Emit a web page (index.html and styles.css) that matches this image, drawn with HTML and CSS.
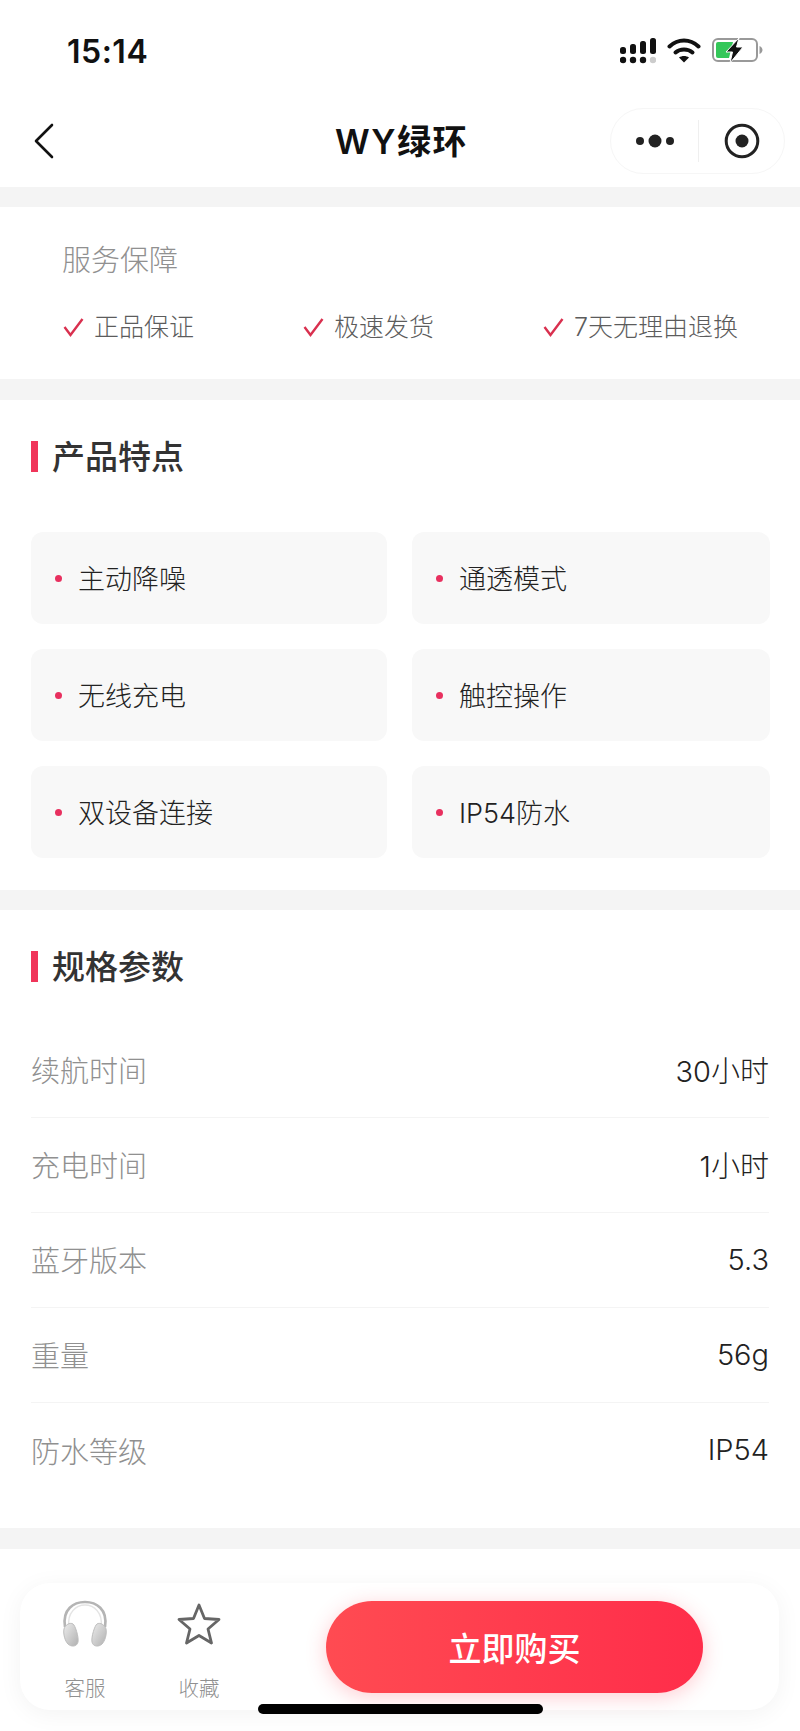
FILE: index.html
```html
<!DOCTYPE html>
<html lang="zh">
<head>
<meta charset="UTF-8" />
<meta name="viewport" content="width=device-width, initial-scale=1" />
<title>WY绿环</title>
<link rel="stylesheet" href="styles.css">
</head>
<body>

<div class="status">
  <span class="time">15:14</span>
  <div class="status-icons">
    <svg width="36" height="26" viewBox="0 0 36 26">
      <rect x="0" y="9" width="6" height="7" rx="2.500" fill="#111"/>
      <rect x="10" y="6" width="6" height="10" rx="2.500" fill="#111"/>
      <rect x="20" y="3" width="6" height="13" rx="2.500" fill="#111"/>
      <rect x="30" y="0" width="6" height="16" rx="2.500" fill="#111"/>
      <circle cx="3" cy="22" r="3.200" fill="#111"/>
      <circle cx="13" cy="22" r="3.200" fill="#111"/>
      <circle cx="23" cy="22" r="3.200" fill="#111"/>
      <circle cx="33" cy="22" r="3.200" fill="#ccc"/>
    </svg>
    <svg width="34" height="26" viewBox="0 0 34 26">
      <path d="M2.500 8.500 C11 0.500 23 0.500 31.500 8.500" fill="none" stroke="#111" stroke-width="4" stroke-linecap="round"/>
      <path d="M8.500 14.500 C13 10.500 21 10.500 25.500 14.500" fill="none" stroke="#111" stroke-width="4" stroke-linecap="round"/>
      <path d="M12 19.500 C15 17.500 19 17.500 22 19.500 L17 24.500 Z" fill="#111"/>
    </svg>
    <svg class="battery" width="51" height="30" viewBox="0 0 51 30">
      <rect x="1" y="4" width="44" height="22" rx="5" fill="#fff" stroke="#999" stroke-width="2"/>
      <path d="M4 9 a2 2 0 0 1 2-2 H21 L17 23 H6 a2 2 0 0 1-2-2 Z" fill="#34c759"/>
      <path d="M47.500 11 C49.500 12 50.500 13.500 50.500 15 C50.500 16.500 49.500 18 47.500 19 Z" fill="#999"/>
      <path d="M27 3 L14 17 H20.500 L18 28 L31 12 H24.500 Z" fill="#111" stroke="#fff" stroke-width="1"/>
    </svg>
  </div>
</div>

<header class="navbar">
  <svg width="22" height="36" viewBox="0 0 22 36">
    <path d="M19 2 L3 18 L19 34" fill="none" stroke="#111" stroke-width="2.600" stroke-linecap="round" stroke-linejoin="round"/>
  </svg>
  <h1 class="title">WY绿环</h1>
  <div class="capsule">
    <div class="capsule-btn">
      <svg width="40" height="16" viewBox="0 0 40 16">
        <circle cx="5" cy="8" r="4" fill="#222"/>
        <circle cx="20" cy="8" r="6.500" fill="#222"/>
        <circle cx="35" cy="8" r="4" fill="#222"/>
      </svg>
    </div>
    <div class="capsule-btn capsule-right">
      <svg width="36" height="36" viewBox="0 0 36 36">
        <circle cx="18" cy="18" r="15.800" fill="none" stroke="#222" stroke-width="3"/>
        <circle cx="18" cy="18" r="6.500" fill="#222"/>
      </svg>
    </div>
  </div>
</header>

<section class="service">
  <div class="service-title">服务保障</div>
  <div class="service-list">
    <div class="service-item">
      <svg width="21" height="21" viewBox="0 0 21 21"><path d="M1.500 10 L7.500 18 L19.500 2" fill="none" stroke="#d9304f" stroke-width="2.400"/></svg>
      <span>正品保证</span>
    </div>
    <div class="service-item">
      <svg width="21" height="21" viewBox="0 0 21 21"><path d="M1.500 10 L7.500 18 L19.500 2" fill="none" stroke="#d9304f" stroke-width="2.400"/></svg>
      <span>极速发货</span>
    </div>
    <div class="service-item">
      <svg width="21" height="21" viewBox="0 0 21 21"><path d="M1.500 10 L7.500 18 L19.500 2" fill="none" stroke="#d9304f" stroke-width="2.400"/></svg>
      <span>7天无理由退换</span>
    </div>
  </div>
</section>

<section class="features">
  <h2 class="section-title">产品特点</h2>
  <div class="feature-grid">
    <div class="feature"><i></i>主动降噪</div>
    <div class="feature"><i></i>通透模式</div>
    <div class="feature"><i></i>无线充电</div>
    <div class="feature"><i></i>触控操作</div>
    <div class="feature"><i></i>双设备连接</div>
    <div class="feature"><i></i>IP54防水</div>
  </div>
</section>

<section class="specs">
  <h2 class="section-title">规格参数</h2>
  <div class="spec-list">
    <div class="spec"><span>续航时间</span><b>30小时</b></div>
    <div class="spec"><span>充电时间</span><b>1小时</b></div>
    <div class="spec"><span>蓝牙版本</span><b>5.3</b></div>
    <div class="spec"><span>重量</span><b>56g</b></div>
    <div class="spec"><span>防水等级</span><b>IP54</b></div>
  </div>
</section>

<section class="page-end"></section>

<div class="bottom-bar">
  <div class="bar-action">
    <svg width="50" height="50" viewBox="0 0 50 50">
      <defs>
        <linearGradient id="cup" x1="0" y1="0" x2="1" y2="1">
          <stop offset="0" stop-color="#ececec"/>
          <stop offset="1" stop-color="#b0b0b0"/>
        </linearGradient>
      </defs>
      <path d="M5 27 C2 9 14 2 25 2 C36 2 48 9 45 27" fill="none" stroke="#b4b4b4" stroke-width="2.600"/>
      <path d="M9 26 C7 13 16 5 25 5 C34 5 43 13 41 26" fill="none" stroke="#e4e4e4" stroke-width="1.500"/>
      <path d="M4 29 C5 25 10 22 13 24 C15 25 19 37 18 42 C17 47 11 47 8 44 C5 41 3 34 4 29 Z" fill="url(#cup)" stroke="#bdbdbd"/>
      <path d="M46 29 C45 25 40 22 37 24 C35 25 31 37 32 42 C33 47 39 47 42 44 C45 41 47 34 46 29 Z" fill="url(#cup)" stroke="#bdbdbd"/>
    </svg>
    <span>客服</span>
  </div>
  <div class="bar-action bar-star">
    <svg width="46" height="46" viewBox="0 0 46 46">
      <path d="M23 4 L28.500 17.500 L43 18.500 L32 28 L35.500 42 L23 34.500 L10.500 42 L14 28 L3 18.500 L17.500 17.500 Z" fill="none" stroke="#666" stroke-width="2.800" stroke-linejoin="round"/>
    </svg>
    <span>收藏</span>
  </div>
  <button class="buy">立即购买</button>
</div>
<div class="home-indicator"></div>

</body>
</html>
```

FILE: styles.css
```css
* {
  box-sizing: border-box;
}
html, body {
  margin: 0;
  padding: 0;
}
body {
  position: relative;
  height: 1731px;
  overflow: hidden;
  background: #fff;
  font-family: Inter, "Noto Sans CJK SC", sans-serif;
  font-weight: 300;
  color: #333;
}
section {
  background: #fff;
  border-top: 20px solid #f4f4f4;
}

/* status bar */
.status {
  height: 94px;
  display: flex;
  justify-content: space-between;
  padding: 32px 37px 0 67px;
}
.time {
  font-size: 32px;
  font-weight: 600;
  line-height: 40px;
  letter-spacing: 0.500px;
  color: #111;
}
.status-icons {
  display: flex;
  align-items: flex-start;
  gap: 11px;
  padding-top: 6px;
}
.battery {
  margin-top: -3px;
}

/* nav */
.navbar {
  height: 93px;
  display: flex;
  align-items: center;
  justify-content: space-between;
  position: relative;
  padding: 0 15px 0 33px;
}
.title {
  position: absolute;
  left: 335px;
  top: 24px;
  margin: 0;
  font-size: 34px;
  line-height: 48px;
  font-weight: 600;
  letter-spacing: 1.500px;
  color: #111;
}
.capsule {
  width: 175px;
  height: 66px;
  display: flex;
  border: 1px solid #f6f6f6;
  border-radius: 33px;
}
.capsule-btn {
  flex: 0 0 87px;
  display: flex;
  align-items: center;
  justify-content: center;
}
.capsule-right {
  flex: 1;
  padding-left: 2px;
  position: relative;
}
.capsule-right::before {
  content: "";
  position: absolute;
  left: 0;
  top: 11px;
  bottom: 11px;
  width: 1px;
  background: #efefef;
}

/* service */
.service {
  height: 192px;
  padding: 33px 0 0 62px;
}
.service-title {
  font-size: 29px;
  line-height: 42px;
  color: #909090;
}
.service-list {
  display: flex;
  margin: 24px 0 0 1px;
}
.service-item {
  flex: 0 0 240px;
  display: flex;
  align-items: center;
  gap: 10px;
  font-size: 25px;
  line-height: 42px;
  color: #5c5c5c;
}

/* features */
.section-title {
  margin: 0;
  padding-left: 21px;
  position: relative;
  font-size: 33px;
  line-height: 50px;
  font-weight: 500;
  color: #333;
}
.section-title::before {
  content: "";
  position: absolute;
  left: 0;
  top: 9px;
  width: 7px;
  height: 31px;
  background: #f0355a;
}
.features {
  height: 511px;
  border-top-width: 21px;
  padding: 32px 30px 0 31px;
}
.feature-grid {
  display: grid;
  grid-template-columns: 356px 358px;
  grid-auto-rows: 92px;
  gap: 25px;
  margin-top: 50px;
}
.feature {
  display: flex;
  align-items: center;
  padding: 0 0 2px 24px;
  background: #f8f8f8;
  border-radius: 12px;
  font-size: 27px;
  color: #222;
}
.feature i {
  width: 7px;
  height: 7px;
  margin: 2px 16px 0 0;
  border-radius: 50%;
  background: #e8305f;
}

/* specs */
.specs {
  height: 638px;
  padding: 32px 31px 0;
}
.spec-list {
  margin-top: 31px;
}
.spec {
  height: 95px;
  padding-bottom: 2px;
  display: flex;
  align-items: center;
  justify-content: space-between;
  border-bottom: 1px solid #f4f4f4;
  font-size: 29px;
}
.spec:last-child {
  border-bottom: 0;
}
.spec span {
  color: #909090;
}
.spec b {
  font-weight: 300;
  font-size: 29px;
  color: #222;
}
.page-end {
  height: 203px;
  border-top-width: 21px;
}

/* bottom */
.bottom-bar {
  position: absolute;
  left: 20px;
  top: 1583px;
  width: 759px;
  height: 127px;
  background: #fff;
  border-radius: 30px;
  box-shadow: 0 4px 24px rgba(0,0,0,0.05);
}
.bar-action {
  position: absolute;
  left: 40px;
  top: 17px;
  width: 50px;
  display: flex;
  flex-direction: column;
  align-items: center;
  font-size: 20.500px;
  line-height: 30px;
  color: #909090;
}
.bar-action span {
  margin-top: 24px;
  white-space: nowrap;
}
.bar-star {
  left: 154px;
}
.bar-star svg {
  margin: 1px 0 3px;
}
.buy {
  position: absolute;
  left: 306px;
  top: 18px;
  width: 377px;
  height: 92px;
  border: 0;
  border-radius: 46px;
  background: linear-gradient(90deg, #ff4b52, #ff2d4a);
  box-shadow: 0 4px 20px rgba(255,60,80,0.25);
  color: #fff;
  font-family: inherit;
  font-size: 33px;
  font-weight: 500;
}
.home-indicator {
  position: absolute;
  left: 258px;
  top: 1704px;
  width: 285px;
  height: 10px;
  border-radius: 5px;
  background: #000;
}
```
